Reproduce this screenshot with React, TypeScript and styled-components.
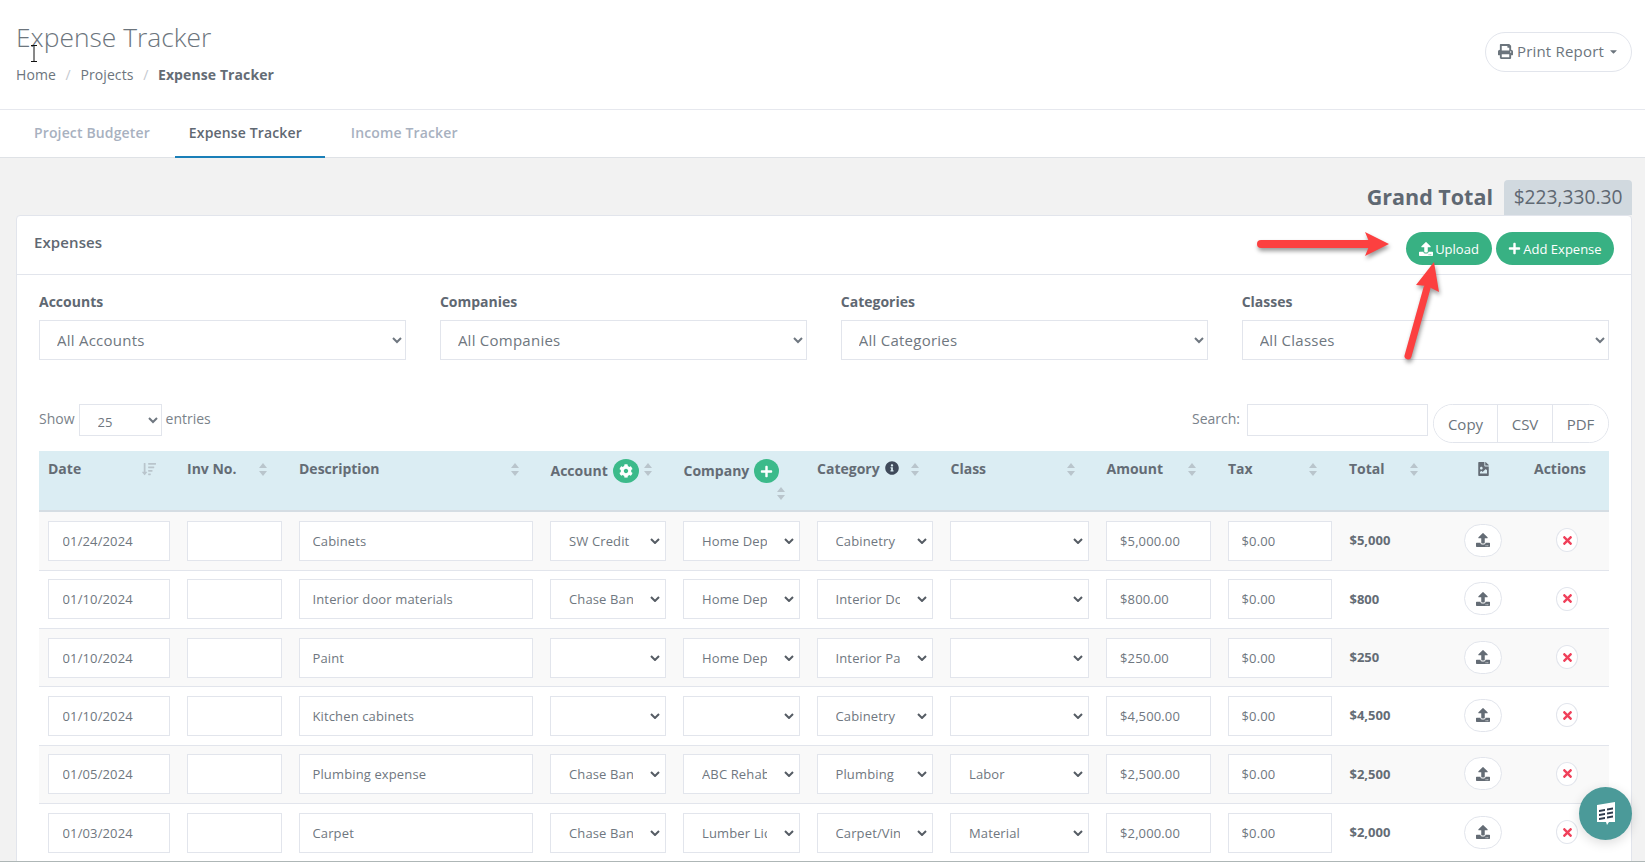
import React from "react";
import styled, { createGlobalStyle } from "styled-components";
import { FaPrint, FaUpload, FaPlus, FaCog, FaInfoCircle, FaFileImage, FaTimes, FaSortAmountDown, FaCaretDown } from "react-icons/fa";

const Global = createGlobalStyle`
  html, body { margin: 0; padding: 0; height: 862px; overflow: hidden; background: #f2f2f2; }
  body { font-family: "Open Sans", "Liberation Sans", sans-serif; color: #646c75; font-size: 14px; }
  * { box-sizing: border-box; }
`;

const chevron = `url("data:image/svg+xml,%3Csvg xmlns='http://www.w3.org/2000/svg' width='10' height='6' viewBox='0 0 10 6'%3E%3Cpath d='M1 1l4 4 4-4' fill='none' stroke='%23555c64' stroke-width='2'/%3E%3C/svg%3E")`;

const Page = styled.div`
  position: relative;
  width: 1645px;
  height: 862px;
  overflow: hidden;
  border-bottom: 1px solid #aeb6b6;
`;
const Header = styled.header`
  height: 110px;
  background: #fff;
  border-bottom: 1px solid #e6e8ee;
  padding: 0 13px 0 16px;
  display: flex;
  justify-content: space-between;
  align-items: flex-start;
`;
const Title = styled.h1`
  margin: 18px 0 0;
  font-size: 26.4px;
  line-height: 38px;
  font-weight: 300;
  color: #6c757d;
`;
const Crumbs = styled.nav`
  display: flex;
  margin-top: 9px;
  font-size: 14px;
  line-height: 20px;
  color: #6c757d;
  letter-spacing: 0.1px;
`;
const Sep = styled.span`
  color: #c4c9d0;
  margin: 0 9.6px;
`;
const CrumbNow = styled.b`
  font-weight: 700;
  color: #646c75;
`;
const PrintButton = styled.button`
  margin-top: 32px;
  width: 147px;
  height: 40px;
  border: 1px solid #e2e5ec;
  border-radius: 20px;
  background: #fff;
  color: #6c757d;
  font: 400 15px "Open Sans", sans-serif;
  letter-spacing: 0.2px;
  display: flex;
  align-items: center;
  justify-content: center;
  gap: 4px;
  padding: 0 0 2px;
`;
const Tabs = styled.nav`
  height: 48px;
  background: #fff;
  border-bottom: 1px solid #dfe2e6;
  display: flex;
  padding-left: 20px;
`;
const Tab = styled.a<{ $active?: boolean; $shift?: number }>`
  height: 48px;
  padding: 0 23px 1px 14px;
  margin: 0 2px 0 ${(p) => p.$shift || 0}px;
  display: flex;
  align-items: center;
  font-size: 14px;
  font-weight: 600;
  letter-spacing: 0.14px;
  color: ${(p) => (p.$active ? "#5f6872" : "#a8b1bf")};
  border-bottom: 2px solid ${(p) => (p.$active ? "#1a7fb8" : "transparent")};
`;
const Main = styled.main`
  padding: 22px 13px 0 16px;
`;
const GrandRow = styled.div`
  display: flex;
  justify-content: flex-end;
  align-items: center;
  gap: 11px;
  height: 35px;
`;
const GrandLabel = styled.span`
  font-size: 21.5px;
  font-weight: 700;
  color: #5f6872;
  padding-bottom: 3px;
`;
const GrandValue = styled.span`
  width: 128px;
  height: 35px;
  background: #d1d9df;
  border-radius: 4px 4px 0 0;
  display: flex;
  align-items: center;
  justify-content: center;
  font-size: 19.2px;
  color: #5f6872;
  padding-bottom: 2px;
`;
const Card = styled.section`
  width: 1616px;
  height: 700px;
  background: #fff;
  border: 1px solid #e2e5ec;
  border-radius: 4px;
`;
const CardHead = styled.div`
  height: 59px;
  border-bottom: 1px solid #e2e5ec;
  display: flex;
  justify-content: space-between;
  padding: 0 17px;
`;
const CardTitle = styled.h2`
  margin: 15px 0 0;
  font-size: 15px;
  line-height: 22px;
  font-weight: 600;
  color: #5f6872;
  letter-spacing: 0.1px;
`;
const HeadActions = styled.div`
  display: flex;
  gap: 4px;
  margin-top: 16px;
`;
const GreenButton = styled.button<{ $w: number }>`
  width: ${(p) => p.$w}px;
  height: 33px;
  border: 0;
  border-radius: 17px;
  background: #38b183;
  color: #fff;
  font: 400 13px "Open Sans", sans-serif;
  display: flex;
  align-items: center;
  justify-content: center;
  gap: 2px;
  padding: 0;
`;
const CardBody = styled.div`
  padding: 0 22px;
`;
const Filters = styled.div`
  display: grid;
  grid-template-columns: repeat(4, 1fr);
  column-gap: 33.5px;
  padding-top: 17px;
`;
const FilterLabel = styled.label`
  display: block;
  font-size: 14px;
  line-height: 20px;
  font-weight: 700;
  color: #5f6872;
  margin-bottom: 8px;
`;
const FilterSelect = styled.select`
  width: 100%;
  height: 40px;
  border: 1px solid #e2e5ec;
  border-radius: 0;
  background: #fff;
  color: #6f7780;
  font: 400 15px "Open Sans", sans-serif;
  letter-spacing: 0.25px;
  padding: 0 13px;
`;
const Toolbar = styled.div`
  display: flex;
  justify-content: space-between;
  align-items: flex-start;
  margin-top: 44px;
  height: 47px;
`;
const ToolGroup = styled.div`
  display: flex;
  align-items: flex-start;
  color: #7a828a;
  font-size: 14px;
  line-height: 30px;
`;
const LengthSelect = styled.select`
  width: 83px;
  height: 32px;
  margin: 0 4px;
  border: 1px solid #e2e5ec;
  border-radius: 0;
  background: #fff;
  color: #6f7780;
  font: 400 13px "Open Sans", sans-serif;
  padding: 3px 0 0 14px;
`;
const SearchInput = styled.input`
  width: 181px;
  height: 32px;
  margin: 0 5px 0 7px;
  border: 1px solid #e2e5ec;
  background: #fff;
`;
const ExportGroup = styled.div`
  display: flex;
  height: 39px;
  border: 1px solid #e2e5ec;
  border-radius: 20px;
  overflow: hidden;
`;
const ExportButton = styled.button<{ $w: number }>`
  width: ${(p) => p.$w}px;
  border: 0;
  border-left: 1px solid #e2e5ec;
  background: #fff;
  color: #6c757d;
  font: 400 15px "Open Sans", sans-serif;
  padding: 0;
  &:first-child { border-left: 0; }
`;
const Table = styled.table`
  width: 1570px;
  table-layout: fixed;
  border-collapse: collapse;
`;
const Th = styled.th`
  position: relative;
  height: 60px;
  padding: 7px 9px 0;
  background: #dbedf3;
  border-bottom: 2px solid #d5dde3;
  text-align: left;
  vertical-align: top;
  font-size: 14px;
  line-height: 22px;
  font-weight: 700;
  color: #646c75;
  white-space: nowrap;
`;
const CenterTh = styled(Th)`
  text-align: center;
  font-size: 15px;
`;
const HeadWithIcon = styled.span`
  display: flex;
  align-items: center;
  gap: 5px;
  margin-top: 1px;
`;
const CircleIcon = styled.span<{ $w: number }>`
  width: ${(p) => p.$w}px;
  height: 24px;
  border-radius: 50%;
  background: #3cba8a;
  color: #fff;
  display: inline-flex;
  align-items: center;
  justify-content: center;
`;
const InfoIcon = styled(FaInfoCircle)`
  width: 14px;
  height: 14px;
  margin-left: 2px;
  vertical-align: -1px;
  color: #3f4a5a;
`;
const FileIcon = styled(FaFileImage)`
  width: 13px;
  height: 14px;
  vertical-align: -1px;
`;
const SortMark = styled.svg<{ $low?: boolean }>`
  position: absolute;
  right: 23px;
  top: ${(p) => (p.$low ? 36 : 12)}px;
  width: 8px;
  height: 13px;
  fill: #b9c5cc;
`;
const SortAmount = styled(FaSortAmountDown)`
  position: absolute;
  right: 22px;
  top: 11px;
  width: 14px;
  height: 14px;
  color: #b9c5cc;
`;
const Tr = styled.tr<{ $odd: boolean; $first: boolean }>`
  background: ${(p) => (p.$odd ? "#f9f9f9" : "#fff")};
  height: ${(p) => (p.$first ? 59 : 58.4)}px;
`;
const Td = styled.td`
  padding: 0 8.5px;
  border-bottom: 1px solid #e2e5ec;
  vertical-align: middle;
`;
const CenterTd = styled(Td)`
  text-align: center;
`;
const CellInput = styled.input<{ $inset?: number }>`
  display: block;
  width: 100%;
  height: 40px;
  border: 1px solid #e2e5ec;
  border-radius: 0;
  background: #fff;
  color: #6f7780;
  font: 400 13px "Open Sans", sans-serif;
  letter-spacing: 0.13px;
  padding: 0 13px 0 ${(p) => p.$inset ?? 13}px;
  outline: 0;
`;
const CellSelect = styled.select`
  display: block;
  width: 100%;
  height: 40px;
  border: 1px solid #e2e5ec;
  border-radius: 0;
  appearance: none;
  background: #fff ${chevron} no-repeat right 5px center;
  color: #6f7780;
  font: 400 13px "Open Sans", sans-serif;
  letter-spacing: 0.13px;
  padding: 0 32px 0 18px;
`;
const TotalText = styled.b`
  display: block;
  margin: -1px 0 0 1px;
  font-size: 13px;
  font-weight: 700;
  color: #646c75;
`;
const RowUpload = styled.button`
  width: 38px;
  height: 33px;
  margin-bottom: 1px;
  border: 1px solid #e2e5ec;
  border-radius: 17px;
  background: #fff;
  color: #646c75;
  display: inline-flex;
  align-items: center;
  justify-content: center;
  padding: 0;
`;
const RowDelete = styled.button`
  width: 22px;
  height: 24px;
  margin-bottom: 1px;
  border: 1px solid #e2e5ec;
  border-radius: 50%;
  background: #fff;
  color: #f0405a;
  display: inline-flex;
  align-items: center;
  justify-content: center;
  padding: 0;
`;
const Annotations = styled.svg`
  position: absolute;
  left: 1250px;
  top: 225px;
  width: 200px;
  height: 145px;
  pointer-events: none;
  filter: drop-shadow(1px 3px 2px rgba(0, 0, 0, 0.4));
`;
const Cursor = styled.svg`
  position: absolute;
  left: 30px;
  top: 45px;
  width: 8px;
  height: 17px;
  pointer-events: none;
`;
const ChatBubble = styled.button`
  position: absolute;
  left: 1579px;
  top: 787px;
  width: 53px;
  height: 53px;
  border: 0;
  border-radius: 50%;
  background: #4b9a99;
  box-shadow: 0 3px 12px rgba(0, 0, 0, 0.14);
  display: flex;
  align-items: center;
  justify-content: center;
  padding: 0;
`;

const Sort = ({ low }: { low?: boolean }) => (
  <SortMark $low={low} viewBox="0 0 8 13">
    <path d="M4 0 8 5H0zM4 13 0 8h8z" />
  </SortMark>
);

const widths = [139, 112, 251.5, 133, 133.5, 133.5, 156, 121.5, 121, 101, 84, 84];

const rows = [
  ["01/24/2024", "Cabinets", "SW Credit", "Home Depot", "Cabinetry", "", "$5,000.00", "$5,000"],
  ["01/10/2024", "Interior door materials", "Chase Bank", "Home Depot", "Interior Doors", "", "$800.00", "$800"],
  ["01/10/2024", "Paint", "", "Home Depot", "Interior Paint", "", "$250.00", "$250"],
  ["01/10/2024", "Kitchen cabinets", "", "", "Cabinetry", "", "$4,500.00", "$4,500"],
  ["01/05/2024", "Plumbing expense", "Chase Bank", "ABC Rehab", "Plumbing", "Labor", "$2,500.00", "$2,500"],
  ["01/03/2024", "Carpet", "Chase Bank", "Lumber Liquidators", "Carpet/Vinyl", "Material", "$2,000.00", "$2,000"],
];

const Pick = ({ v }: { v: string }) => (
  <CellSelect defaultValue={v}>
    <option value={v}>{v}</option>
  </CellSelect>
);

const filters = [
  ["Accounts", "All Accounts"],
  ["Companies", "All Companies"],
  ["Categories", "All Categories"],
  ["Classes", "All Classes"],
];

export default function App() {
  return (
    <Page>
      <Global />
      <Header>
        <div>
          <Title>Expense Tracker</Title>
          <Crumbs>
            <span>Home</span>
            <Sep>/</Sep>
            <span>Projects</span>
            <Sep>/</Sep>
            <CrumbNow>Expense Tracker</CrumbNow>
          </Crumbs>
        </div>
        <PrintButton>
          <FaPrint size={15} /> Print Report <FaCaretDown size={11} />
        </PrintButton>
      </Header>
      <Tabs>
        <Tab>Project Budgeter</Tab>
        <Tab $active>Expense Tracker</Tab>
        <Tab $shift={10}>Income Tracker</Tab>
      </Tabs>
      <Main>
        <GrandRow>
          <GrandLabel>Grand Total</GrandLabel>
          <GrandValue>$223,330.30</GrandValue>
        </GrandRow>
        <Card>
          <CardHead>
            <CardTitle>Expenses</CardTitle>
            <HeadActions>
              <GreenButton $w={86}>
                <FaUpload size={14} /> Upload
              </GreenButton>
              <GreenButton $w={118}>
                <FaPlus size={13} /> Add Expense
              </GreenButton>
            </HeadActions>
          </CardHead>
          <CardBody>
            <Filters>
              {filters.map(([label, value]) => (
                <div key={label}>
                  <FilterLabel>{label}</FilterLabel>
                  <FilterSelect defaultValue={value}>
                    <option>{value}</option>
                  </FilterSelect>
                </div>
              ))}
            </Filters>
            <Toolbar>
              <ToolGroup>
                Show
                <LengthSelect defaultValue="25">
                  <option>25</option>
                </LengthSelect>
                entries
              </ToolGroup>
              <ToolGroup>
                Search:
                <SearchInput />
                <ExportGroup>
                  <ExportButton $w={63}>Copy</ExportButton>
                  <ExportButton $w={55}>CSV</ExportButton>
                  <ExportButton $w={56}>PDF</ExportButton>
                </ExportGroup>
              </ToolGroup>
            </Toolbar>
            <Table>
              <colgroup>
                {widths.map((w, i) => (
                  <col key={i} style={{ width: w }} />
                ))}
              </colgroup>
              <thead>
                <tr>
                  <Th>Date<SortAmount /></Th>
                  <Th>Inv No.<Sort /></Th>
                  <Th>Description<Sort /></Th>
                  <Th>
                    <HeadWithIcon>
                      Account
                      <CircleIcon $w={26}><FaCog size={14} /></CircleIcon>
                    </HeadWithIcon>
                    <Sort />
                  </Th>
                  <Th>
                    <HeadWithIcon>
                      Company
                      <CircleIcon $w={25}><FaPlus size={13} /></CircleIcon>
                    </HeadWithIcon>
                    <Sort low />
                  </Th>
                  <Th>
                    Category <InfoIcon />
                    <Sort />
                  </Th>
                  <Th>Class<Sort /></Th>
                  <Th>Amount<Sort /></Th>
                  <Th>Tax<Sort /></Th>
                  <Th>Total<Sort /></Th>
                  <CenterTh><FileIcon /></CenterTh>
                  <Th>Actions</Th>
                </tr>
              </thead>
              <tbody>
                {rows.map((r, i) => (
                  <Tr key={i} $odd={i % 2 === 0} $first={i === 0}>
                    <Td><CellInput $inset={14} defaultValue={r[0]} /></Td>
                    <Td><CellInput /></Td>
                    <Td><CellInput defaultValue={r[1]} /></Td>
                    <Td><Pick v={r[2]} /></Td>
                    <Td><Pick v={r[3]} /></Td>
                    <Td><Pick v={r[4]} /></Td>
                    <Td><Pick v={r[5]} /></Td>
                    <Td><CellInput defaultValue={r[6]} /></Td>
                    <Td><CellInput defaultValue="$0.00" /></Td>
                    <Td><TotalText>{r[7]}</TotalText></Td>
                    <CenterTd><RowUpload><FaUpload size={14} /></RowUpload></CenterTd>
                    <CenterTd><RowDelete><FaTimes size={13} /></RowDelete></CenterTd>
                  </Tr>
                ))}
              </tbody>
            </Table>
          </CardBody>
        </Card>
      </Main>
      <Annotations viewBox="1250 225 200 145">
        <path d="M1261 244H1372" stroke="#fc4040" strokeWidth="8" strokeLinecap="round" fill="none" />
        <path d="M1365 232 1389 244 1365 256 1370 244z" fill="#fc4040" />
        <path d="M1408 356 1427 288" stroke="#fc4040" strokeWidth="7" strokeLinecap="round" fill="none" />
        <path d="M1434 262 1439 292 1427 286 1416 285z" fill="#fc4040" />
      </Annotations>
      <Cursor viewBox="0 0 8 17">
        <path d="M1 .5h6M1 16.5h6M4 .5v16" stroke="#111" strokeWidth="1" fill="none" />
      </Cursor>
      <ChatBubble aria-label="Chat">
        <svg width="20" height="24" viewBox="0 0 20 24">
          <path d="M1 3 19 0v20h-6l-2 3-1-3H1z" fill="#fff" />
          <path d="M3 8c3 0 3-1 6-1v2c-3 0-3 1-6 1zM11 6.500c3 0 3-1 6-1v2c-3 0-3 1-6 1zM3 12c3 0 3-1 6-1v2c-3 0-3 1-6 1zM11 10.500c3 0 3-1 6-1v2c-3 0-3 1-6 1zM3 16c3 0 3-1 6-1v2c-3 0-3 1-6 1zM11 14.500c3 0 3-1 6-1v2c-3 0-3 1-6 1z" fill="#2f3b4d" />
        </svg>
      </ChatBubble>
    </Page>
  );
}
